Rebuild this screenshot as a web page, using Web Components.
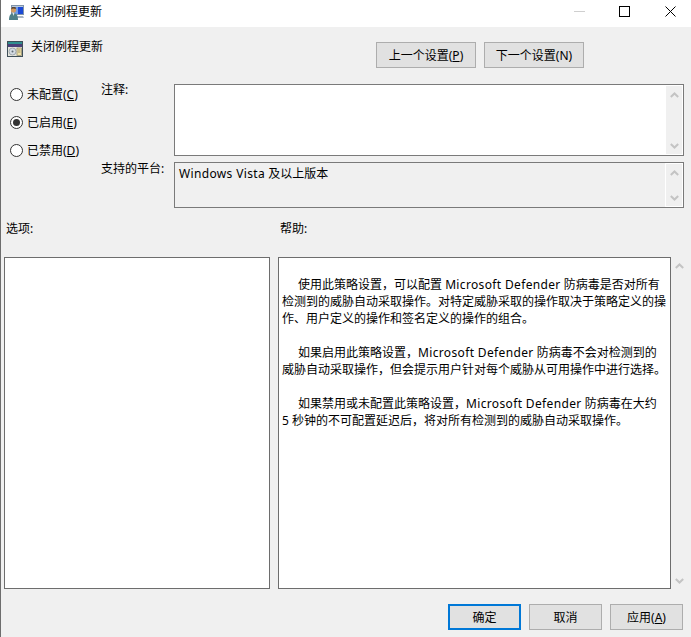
<!DOCTYPE html>
<html lang="zh">
<head>
<meta charset="utf-8">
<title>关闭例程更新</title>
<style>
  html, body { margin: 0; height: 100%; }
  body {
    background: #f0f0f0;
    color: #000;
    font: 12px/17px "Noto Sans", "Noto Sans CJK SC", sans-serif;
    overflow: hidden;
  }
  .en { letter-spacing: .35px; }
</style>
</head>
<body>
<policy-dialog caption="关闭例程更新">
  <win-radio slot="state">未配置(<u>C</u>)</win-radio>
  <win-radio slot="state" checked>已启用(<u>E</u>)</win-radio>
  <win-radio slot="state">已禁用(<u>D</u>)</win-radio>

  <win-textbox slot="comment" style="height:72px"></win-textbox>
  <win-textbox slot="platform" readonly style="height:46px"><span class="en">Windows Vista</span> 及以上版本</win-textbox>

  <win-pane slot="options"></win-pane>
  <win-pane slot="help" scroll>
    <p>使用此策略设置，可以配置 <span class="en">Microsoft Defender</span> 防病毒是否对所有<br>检测到的威胁自动采取操作。对特定威胁采取的操作取决于策略定义的操<br>作、用户定义的操作和签名定义的操作的组合。</p>
    <p>如果启用此策略设置，<span class="en">Microsoft Defender</span> 防病毒不会对检测到的<br>威胁自动采取操作，但会提示用户针对每个威胁从可用操作中进行选择。</p>
    <p>如果禁用或未配置此策略设置，<span class="en">Microsoft Defender</span> 防病毒在大约<br>5 秒钟的不可配置延迟后，将对所有检测到的威胁自动采取操作。</p>
  </win-pane>
</policy-dialog>

<script>
const CHEVRON_UP = '<svg width="9" height="6" viewBox="0 0 9 6"><path d="M.8 5 4.5 1.5 8.2 5" fill="none" stroke="#c4c4c4" stroke-width="2"/></svg>';
const CHEVRON_DOWN = '<svg width="9" height="6" viewBox="0 0 9 6"><path d="M.8 1 4.5 4.5 8.2 1" fill="none" stroke="#c4c4c4" stroke-width="2"/></svg>';

class WinButton extends HTMLElement {
  constructor() {
    super();
    this.attachShadow({ mode: 'open' });
  }

  connectedCallback() {
    this.shadowRoot.innerHTML = `
      <style>
        :host {
          display: flex;
          align-items: center;
          justify-content: center;
          box-sizing: border-box;
          width: 73px;
          height: 26px;
          background: #e1e1e1;
          border: 1px solid #adadad;
          white-space: nowrap;
        }
        :host([wide]) { width: 100px; }
        :host([default]) { border: 2px solid #0078d7; }
      </style>
      <slot></slot>
    `;
  }
}

class WinRadio extends HTMLElement {
  constructor() {
    super();
    this.attachShadow({ mode: 'open' });
  }

  connectedCallback() {
    this.shadowRoot.innerHTML = `
      <style>
        :host {
          display: flex;
          align-items: center;
          gap: 4px;
          height: 28px;
          white-space: nowrap;
        }
        .dot {
          box-sizing: border-box;
          width: 13px;
          height: 13px;
          border: 1px solid #333;
          border-radius: 50%;
          background: #fff;
          display: flex;
          align-items: center;
          justify-content: center;
        }
        :host([checked]) .dot::after {
          content: "";
          width: 7px;
          height: 7px;
          border-radius: 50%;
          background: #333;
        }
      </style>
      <span class="dot"></span>
      <span><slot></slot></span>
    `;
  }
}

class WinScrollStrip extends HTMLElement {
  constructor() {
    super();
    this.attachShadow({ mode: 'open' });
  }

  connectedCallback() {
    this.shadowRoot.innerHTML = `
      <style>
        :host {
          display: flex;
          flex-direction: column;
          justify-content: space-between;
          box-sizing: border-box;
          width: 18px;
          flex: none;
          background: #f0f0f0;
        }
        :host([framed]) { border: 1px solid #fff; }
        :host(:not([framed])) { width: 17px; }
        div { height: 17px; display: flex; align-items: center; justify-content: center; }
      </style>
      <div>${CHEVRON_UP}</div>
      <div>${CHEVRON_DOWN}</div>
    `;
  }
}

class WinTextbox extends HTMLElement {
  constructor() {
    super();
    this.attachShadow({ mode: 'open' });
  }

  connectedCallback() {
    this.shadowRoot.innerHTML = `
      <style>
        :host {
          display: flex;
          box-sizing: border-box;
          margin-top: 3px;
          border: 1px solid #7a7a7a;
          background: #fff;
        }
        :host([readonly]) { background: #f0f0f0; }
        .text { flex: 1; padding: 2px 4px; }
      </style>
      <div class="text"><slot></slot></div>
      <win-scroll-strip framed></win-scroll-strip>
    `;
  }
}

class WinPane extends HTMLElement {
  constructor() {
    super();
    this.attachShadow({ mode: 'open' });
  }

  connectedCallback() {
    this.shadowRoot.innerHTML = `
      <style>
        :host { display: flex; height: 332px; }
        .box {
          flex: 1;
          box-sizing: border-box;
          border: 1px solid #6d6d6d;
          background: #fff;
          padding: 18px 3px 0;
        }
        ::slotted(p) { margin: 0 0 17px; white-space: nowrap; text-indent: 16px; }
      </style>
      <div class="box"><slot></slot></div>
      ${this.hasAttribute('scroll') ? '<win-scroll-strip></win-scroll-strip>' : ''}
    `;
  }
}

class WinTitlebar extends HTMLElement {
  constructor() {
    super();
    this.attachShadow({ mode: 'open' });
  }

  connectedCallback() {
    this.shadowRoot.innerHTML = `
      <style>
        :host {
          display: flex;
          align-items: center;
          height: 27px;
          background: #fff;
          padding: 0 15px 5px 8px;
          box-sizing: border-box;
        }
        .title { flex: 1; padding-left: 4px; }
        .ctl { display: block; width: 11px; height: 11px; }
        .min { margin-right: 34px; }
        .max { margin-right: 35px; }
      </style>
      <svg width="17" height="17" viewBox="0 0 17 17">
        <rect x="2.500" y="2.500" width="12" height="9" fill="#b9c9dc" stroke="#7f93aa"/>
        <rect x="5" y="4" width="9" height="7" fill="#1b49d6"/>
        <rect x="5" y="4" width="4" height="7" fill="#6f9be8"/>
        <path d="M7 13h7l1 2H8z" fill="#a9b6c4"/>
        <circle cx="4.500" cy="7" r="2.600" fill="#d29a5f"/>
        <path d="M2 6.500 3 4h3.500L7 6 4 5.500z" fill="#5a4634"/>
        <path d="M0 17c0-5 2-7 4.500-7s4.500 2 4.500 7z" fill="#4e7f88"/>
        <path d="M3.500 10h2l-1 3z" fill="#dfe9ec"/>
      </svg>
      <span class="title"><slot></slot></span>
      <svg class="ctl min" viewBox="0 0 11 11"><path d="M0 5.500h11" stroke="#cfcfcf"/></svg>
      <svg class="ctl max" viewBox="0 0 11 11"><rect x=".5" y=".5" width="10" height="10" fill="none" stroke="#000"/></svg>
      <svg class="ctl" viewBox="0 0 11 11"><path d="M.5.500l10 10M10.500.500l-10 10" stroke="#000" fill="none"/></svg>
    `;
  }
}

class PolicyDialog extends HTMLElement {
  constructor() {
    super();
    this.attachShadow({ mode: 'open' });
  }

  connectedCallback() {
    const caption = this.getAttribute('caption');
    this.shadowRoot.innerHTML = `
      <style>
        :host {
          display: block;
          height: 637px;
          box-sizing: border-box;
          border-left: 1px solid #6d6d6d;
        }
        .head {
          display: flex;
          justify-content: space-between;
          height: 54px;
          padding: 0 107px 0 6px;
          box-sizing: border-box;
        }
        .name { display: flex; gap: 8px; align-items: center; height: 38px; }
        .name svg { margin-top: 6px; }
        .nav { display: flex; gap: 8px; padding-top: 15px; }
        .mid { display: grid; grid-template-columns: 100px 73px 510px; }
        .states { padding-left: 9px; grid-row: 1 / 3; margin-top: -1px; }
        .fields { display: grid; grid-column: 2 / 4; grid-template-columns: 73px 510px; row-gap: 3px; }
        .platform-label { margin-top: 1px; }
        .labels, .panes { display: grid; grid-template-columns: 266px 410px; column-gap: 8px; padding-left: 3px; }
        .labels { height: 49px; padding-top: 12px; box-sizing: border-box; }
        .labels span { padding-left: 2px; }
        .foot { display: flex; justify-content: flex-end; gap: 8px; padding: 15px 8px 0 0; }
      </style>
      <win-titlebar>${caption}</win-titlebar>
      <div class="head">
        <div class="name">
          <svg width="16" height="16" viewBox="0 0 16 16">
            <rect x=".5" y=".5" width="15" height="15" fill="#ddd9c4" stroke="#3f4f58"/>
            <rect x="1" y="1" width="14" height="2" fill="#2f8f8f"/>
            <rect x="1" y="3" width="14" height="3" fill="#4a3f78"/>
            <rect x="1" y="6" width="14" height="9" fill="#e4e4dc"/>
            <circle cx="5.500" cy="10.500" r="3.500" fill="#d4dbe2" stroke="#8a9299" stroke-width=".7"/>
            <circle cx="5.500" cy="10.500" r="1" fill="#5f6b75"/>
            <rect x="10" y="7" width="4.500" height="7.500" fill="#efe2a6" stroke="#8a8468" stroke-width=".7"/>
            <path d="M11 9h2.500M11 11h2.500" stroke="#8a8468" stroke-width=".8"/>
          </svg>
          <span>${caption}</span>
        </div>
        <div class="nav">
          <win-button wide>上一个设置(<u>P</u>)</win-button>
          <win-button wide>下一个设置(N)</win-button>
        </div>
      </div>
      <div class="mid">
        <div class="states"><slot name="state"></slot></div>
        <div class="fields">
          <span>注释:</span>
          <slot name="comment"></slot>
          <span class="platform-label">支持的平台:</span>
          <slot name="platform"></slot>
        </div>
      </div>
      <div class="labels"><span>选项:</span><span>帮助:</span></div>
      <div class="panes">
        <slot name="options"></slot>
        <slot name="help"></slot>
      </div>
      <div class="foot">
        <win-button default>确定</win-button>
        <win-button>取消</win-button>
        <win-button>应用(<u>A</u>)</win-button>
      </div>
    `;
  }
}

customElements.define('win-button', WinButton);
customElements.define('win-radio', WinRadio);
customElements.define('win-scroll-strip', WinScrollStrip);
customElements.define('win-textbox', WinTextbox);
customElements.define('win-pane', WinPane);
customElements.define('win-titlebar', WinTitlebar);
customElements.define('policy-dialog', PolicyDialog);
</script>
</body>
</html>
